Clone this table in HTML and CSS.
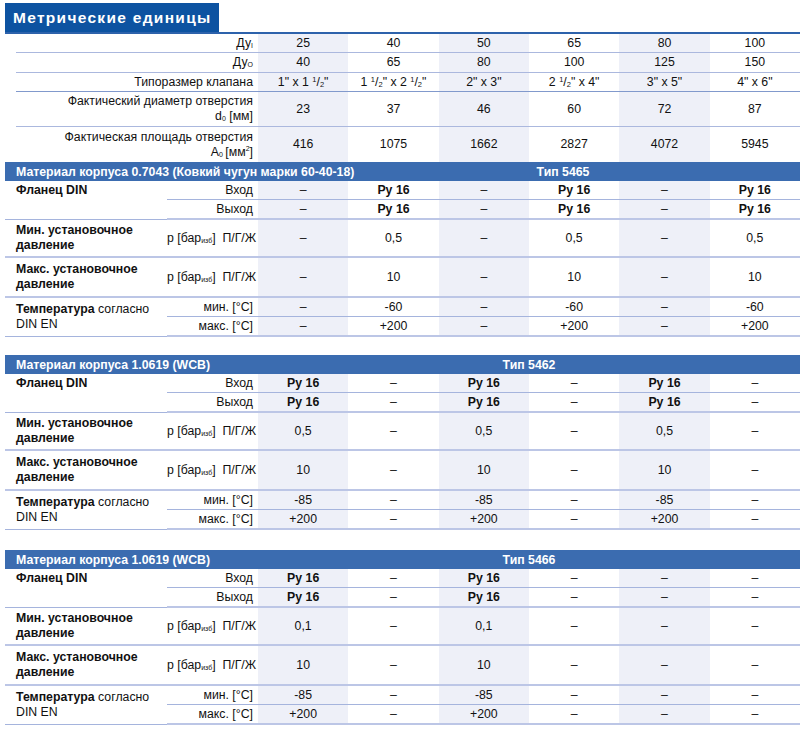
FILE: index.html
```html
<!DOCTYPE html>
<html lang="ru">
<head>
<meta charset="utf-8">
<title>Метрические единицы</title>
<link rel="stylesheet" href="styles.css">
</head>
<body>
<div class="page">
  <div class="title">Метрические единицы</div>
  <div class="rule"></div>

  <div class="top">
    <div class="lbl"><span>Ду<sub class="ix">I</sub></span></div><div class="a">25</div><div>40</div><div class="a">50</div><div>65</div><div class="a">80</div><div>100</div>
    <div class="lbl"><span>Ду<sub class="ix">O</sub></span></div><div class="a">40</div><div>65</div><div class="a">80</div><div>100</div><div class="a">125</div><div>150</div>
    <div class="lbl dk">Типоразмер клапана</div>
    <div class="a dk"><span>1" x 1 <span class="fr"><sup>1</sup>/<sub>2</sub></span>"</span></div>
    <div class="dk"><span>1 <span class="fr"><sup>1</sup>/<sub>2</sub></span>" x 2 <span class="fr"><sup>1</sup>/<sub>2</sub></span>"</span></div>
    <div class="a dk">2" x 3"</div>
    <div class="dk"><span>2 <span class="fr"><sup>1</sup>/<sub>2</sub></span>" x 4"</span></div>
    <div class="a dk">3" x 5"</div>
    <div class="dk">4" x 6"</div>
    <div class="lbl"><span>Фактический диаметр отверстия<br>d<sub class="iz">0</sub> [мм]</span></div><div class="a">23</div><div>37</div><div class="a">46</div><div>60</div><div class="a">72</div><div>87</div>
    <div class="lbl nb"><span>Фактическая площадь отверстия<br>A<sub class="iz">0</sub>&thinsp;[мм<sup class="iz">2</sup>]</span></div><div class="a nb">416</div><div class="nb">1075</div><div class="a nb">1662</div><div class="nb">2827</div><div class="a nb">4072</div><div class="nb">5945</div>
  </div>

  <!-- Section 1 -->
  <div class="sec">
    <div class="hd"><div class="m">Материал корпуса 0.7043 (Ковкий чугун марки 60-40-18)</div><div class="t shift">Тип 5465</div></div>

    <div class="row in">
      <div class="g g2 up">Фланец DIN</div>
      <div class="s">Вход</div>
      <div class="d a">–</div><div class="d bo">Ру 16</div><div class="d a">–</div><div class="d bo">Ру 16</div><div class="d a">–</div><div class="d bo">Ру 16</div>
    </div>
    <div class="row gr">
      <div class="s">Выход</div>
      <div class="d a">–</div><div class="d bo">Ру 16</div><div class="d a">–</div><div class="d bo">Ру 16</div><div class="d a">–</div><div class="d bo">Ру 16</div>
    </div>
    <div class="row gr">
      <div class="g"><span>Мин. установочное<br>давление</span></div>
      <div class="s l"><span>p [бар<sub class="iz">изб</sub>]&nbsp; П/Г/Ж</span></div>
      <div class="d a">–</div><div class="d">0,5</div><div class="d a">–</div><div class="d">0,5</div><div class="d a">–</div><div class="d">0,5</div>
    </div>
    <div class="row gr">
      <div class="g"><span>Макс. установочное<br>давление</span></div>
      <div class="s l"><span>p [бар<sub class="iz">изб</sub>]&nbsp; П/Г/Ж</span></div>
      <div class="d a">–</div><div class="d">10</div><div class="d a">–</div><div class="d">10</div><div class="d a">–</div><div class="d">10</div>
    </div>
    <div class="row in">
      <div class="g g2 nw"><span><b>Температура</b> согласно<br>DIN EN</span></div>
      <div class="s">мин. [°C]</div>
      <div class="d a">–</div><div class="d">-60</div><div class="d a">–</div><div class="d">-60</div><div class="d a">–</div><div class="d">-60</div>
    </div>
    <div class="row gr">
      <div class="s">макс. [°C]</div>
      <div class="d a">–</div><div class="d">+200</div><div class="d a">–</div><div class="d">+200</div><div class="d a">–</div><div class="d">+200</div>
    </div>
  </div>

  <!-- Section 2 -->
  <div class="sec sp1">
    <div class="hd"><div class="m">Материал корпуса 1.0619 (WCB)</div><div class="t">Тип 5462</div></div>

    <div class="row in">
      <div class="g g2 up">Фланец DIN</div>
      <div class="s">Вход</div>
      <div class="d a bo">Ру 16</div><div class="d">–</div><div class="d a bo">Ру 16</div><div class="d">–</div><div class="d a bo">Ру 16</div><div class="d">–</div>
    </div>
    <div class="row gr">
      <div class="s">Выход</div>
      <div class="d a bo">Ру 16</div><div class="d">–</div><div class="d a bo">Ру 16</div><div class="d">–</div><div class="d a bo">Ру 16</div><div class="d">–</div>
    </div>
    <div class="row gr">
      <div class="g"><span>Мин. установочное<br>давление</span></div>
      <div class="s l"><span>p [бар<sub class="iz">изб</sub>]&nbsp; П/Г/Ж</span></div>
      <div class="d a">0,5</div><div class="d">–</div><div class="d a">0,5</div><div class="d">–</div><div class="d a">0,5</div><div class="d">–</div>
    </div>
    <div class="row gr">
      <div class="g"><span>Макс. установочное<br>давление</span></div>
      <div class="s l"><span>p [бар<sub class="iz">изб</sub>]&nbsp; П/Г/Ж</span></div>
      <div class="d a">10</div><div class="d">–</div><div class="d a">10</div><div class="d">–</div><div class="d a">10</div><div class="d">–</div>
    </div>
    <div class="row in">
      <div class="g g2 nw"><span><b>Температура</b> согласно<br>DIN EN</span></div>
      <div class="s">мин. [°C]</div>
      <div class="d a">-85</div><div class="d">–</div><div class="d a">-85</div><div class="d">–</div><div class="d a">-85</div><div class="d">–</div>
    </div>
    <div class="row gr">
      <div class="s">макс. [°C]</div>
      <div class="d a">+200</div><div class="d">–</div><div class="d a">+200</div><div class="d">–</div><div class="d a">+200</div><div class="d">–</div>
    </div>
  </div>

  <!-- Section 3 -->
  <div class="sec sp2">
    <div class="hd"><div class="m">Материал корпуса 1.0619 (WCB)</div><div class="t">Тип 5466</div></div>

    <div class="row in">
      <div class="g g2 up">Фланец DIN</div>
      <div class="s">Вход</div>
      <div class="d a bo">Ру 16</div><div class="d">–</div><div class="d a bo">Ру 16</div><div class="d">–</div><div class="d a">–</div><div class="d">–</div>
    </div>
    <div class="row gr">
      <div class="s">Выход</div>
      <div class="d a bo">Ру 16</div><div class="d">–</div><div class="d a bo">Ру 16</div><div class="d">–</div><div class="d a">–</div><div class="d">–</div>
    </div>
    <div class="row gr">
      <div class="g"><span>Мин. установочное<br>давление</span></div>
      <div class="s l"><span>p [бар<sub class="iz">изб</sub>]&nbsp; П/Г/Ж</span></div>
      <div class="d a">0,1</div><div class="d">–</div><div class="d a">0,1</div><div class="d">–</div><div class="d a">–</div><div class="d">–</div>
    </div>
    <div class="row gr">
      <div class="g"><span>Макс. установочное<br>давление</span></div>
      <div class="s l"><span>p [бар<sub class="iz">изб</sub>]&nbsp; П/Г/Ж</span></div>
      <div class="d a">10</div><div class="d">–</div><div class="d a">10</div><div class="d">–</div><div class="d a">–</div><div class="d">–</div>
    </div>
    <div class="row in">
      <div class="g g2 nw"><span><b>Температура</b> согласно<br>DIN EN</span></div>
      <div class="s">мин. [°C]</div>
      <div class="d a">-85</div><div class="d">–</div><div class="d a">-85</div><div class="d">–</div><div class="d a">–</div><div class="d">–</div>
    </div>
    <div class="row gr">
      <div class="s">макс. [°C]</div>
      <div class="d a">+200</div><div class="d">–</div><div class="d a">+200</div><div class="d">–</div><div class="d a">–</div><div class="d">–</div>
    </div>
  </div>
</div>
</body>
</html>
```

FILE: styles.css
```css
* { box-sizing: border-box; }
html, body { margin: 0; padding: 0; background: #fff; }
body {
  font-family: "Liberation Sans", Arial, Helvetica, sans-serif;
  font-size: 12.3px;
  color: #111;
}
.page { padding: 3px 0 0 5px; width: 800px; }

.title {
  display: flex;
  align-items: center;
  width: 214px;
  height: 29px;
  padding-left: 8px;
  background: #0d53a1;
  color: #fff;
  font-weight: bold;
  font-size: 15.5px;
  letter-spacing: 1.3px;
  white-space: nowrap;
}
.rule { width: 795px; height: 2px; background: #2d62ab; }

sub, sup { line-height: 0; }
.ix { font-size: 7px; vertical-align: -1px; }
.iz { font-size: 7px; }
sub.iz { vertical-align: -1px; }
sup.iz { vertical-align: 5px; }
.fr sup, .fr sub { font-size: 7.5px; }
.fr sup { vertical-align: 4px; }
.fr sub { vertical-align: -1px; }

/* top block */
.top {
  display: grid;
  grid-template-columns: 242px repeat(6, 1fr);
  grid-template-rows: 19px 20px 19px 35px 35px;
  width: 784px;
  margin-left: 11px;
}
.top > div {
  display: flex;
  align-items: center;
  justify-content: center;
  text-align: center;
  line-height: 15px;
  border-bottom: 1px solid #abb8de;
  white-space: nowrap;
}
.top > .lbl { justify-content: flex-end; text-align: right; padding-right: 5px; }
.top > .dk { border-bottom-color: #8199cc; }
.top > .nb { border-bottom: 0; }
.a { background: #eef0f8; }

/* sections */
.sec {
  display: grid;
  grid-template-columns: 162px 91px repeat(6, 1fr);
  grid-template-rows: 19px 19px 20px 38px 40px 19px 20px;
  width: 795px;
}
.sp1 { margin-top: 18px; }
.sp2 { margin-top: 20px; }

.hd {
  grid-column: 1 / -1;
  display: grid;
  grid-template-columns: 253px 1fr;
  align-items: center;
  background: #3b6cb0;
  color: #fff;
  font-weight: bold;
}
.hd .m { padding-left: 11px; white-space: nowrap; }
.hd .t { text-align: center; }
.hd .t.shift { padding-left: 68px; }

.row { display: contents; }
.row > div {
  display: flex;
  align-items: center;
  line-height: 15px;
  white-space: nowrap;
}
.row.in > div { border-bottom: 1px solid #a5b4dd; }
.row.gr > div { border-bottom: 2px solid #bcc6e6; }
.row > .g {
  padding-left: 11px;
  font-weight: bold;
  border-bottom: 2px solid #bcc6e6;
}
.row > .g2 { grid-row: span 2; }
.row > .g.up { align-items: flex-start; padding-top: 2px; }
.row > .g.nw { font-weight: normal; }
.row > .s { justify-content: flex-end; padding-right: 5px; }
.row > .s.l { justify-content: flex-start; padding-right: 0; }
.row > .d { justify-content: center; }
.row > .bo { font-weight: bold; }
```
